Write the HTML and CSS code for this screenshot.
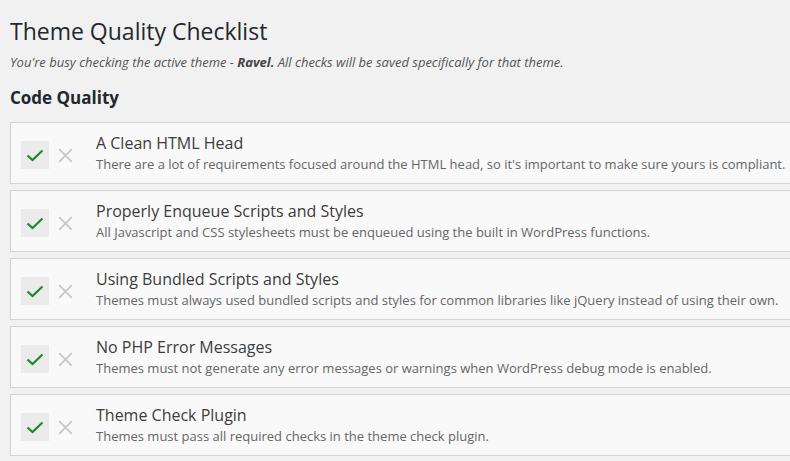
FILE: index.html
```html
<!DOCTYPE html>
<html>
<head>
<meta charset="utf-8">
<link rel="stylesheet" href="styles.css">
</head>
<body>
<div class="wrap">
  <h1 class="title">Theme Quality Checklist</h1>
  <p class="subtitle">You're busy checking the active theme - <b>Ravel.</b> All checks will be saved specifically for that theme.</p>
  <h2 class="section">Code Quality</h2>
  <ul class="list">
    <li class="item">
      <div class="actions">
        <span class="btn check"><svg viewBox="0 0 20 20" width="20" height="20"><path d="M2.5 10.5 L7.5 15 L17.5 5.5" fill="none" stroke="#1e8a2a" stroke-width="2.2"/></svg></span>
        <span class="btn cross"><svg viewBox="0 0 16 16" width="17" height="17"><path d="M2 2 L14 14 M14 2 L2 14" fill="none" stroke="#c8c8c8" stroke-width="1.7"/></svg></span>
      </div>
      <div class="text">
        <div class="name">A Clean HTML Head</div>
        <div class="desc">There are a lot of requirements focused around the HTML head, so it's important to make sure yours is compliant.</div>
      </div>
    </li>
    <li class="item">
      <div class="actions">
        <span class="btn check"><svg viewBox="0 0 20 20" width="20" height="20"><path d="M2.5 10.5 L7.5 15 L17.5 5.5" fill="none" stroke="#1e8a2a" stroke-width="2.2"/></svg></span>
        <span class="btn cross"><svg viewBox="0 0 16 16" width="17" height="17"><path d="M2 2 L14 14 M14 2 L2 14" fill="none" stroke="#c8c8c8" stroke-width="1.7"/></svg></span>
      </div>
      <div class="text">
        <div class="name">Properly Enqueue Scripts and Styles</div>
        <div class="desc">All Javascript and CSS stylesheets must be enqueued using the built in WordPress functions.</div>
      </div>
    </li>
    <li class="item">
      <div class="actions">
        <span class="btn check"><svg viewBox="0 0 20 20" width="20" height="20"><path d="M2.5 10.5 L7.5 15 L17.5 5.5" fill="none" stroke="#1e8a2a" stroke-width="2.2"/></svg></span>
        <span class="btn cross"><svg viewBox="0 0 16 16" width="17" height="17"><path d="M2 2 L14 14 M14 2 L2 14" fill="none" stroke="#c8c8c8" stroke-width="1.7"/></svg></span>
      </div>
      <div class="text">
        <div class="name">Using Bundled Scripts and Styles</div>
        <div class="desc">Themes must always used bundled scripts and styles for common libraries like jQuery instead of using their own.</div>
      </div>
    </li>
    <li class="item">
      <div class="actions">
        <span class="btn check"><svg viewBox="0 0 20 20" width="20" height="20"><path d="M2.5 10.5 L7.5 15 L17.5 5.5" fill="none" stroke="#1e8a2a" stroke-width="2.2"/></svg></span>
        <span class="btn cross"><svg viewBox="0 0 16 16" width="17" height="17"><path d="M2 2 L14 14 M14 2 L2 14" fill="none" stroke="#c8c8c8" stroke-width="1.7"/></svg></span>
      </div>
      <div class="text">
        <div class="name">No PHP Error Messages</div>
        <div class="desc">Themes must not generate any error messages or warnings when WordPress debug mode is enabled.</div>
      </div>
    </li>
    <li class="item">
      <div class="actions">
        <span class="btn check"><svg viewBox="0 0 20 20" width="20" height="20"><path d="M2.5 10.5 L7.5 15 L17.5 5.5" fill="none" stroke="#1e8a2a" stroke-width="2.2"/></svg></span>
        <span class="btn cross"><svg viewBox="0 0 16 16" width="17" height="17"><path d="M2 2 L14 14 M14 2 L2 14" fill="none" stroke="#c8c8c8" stroke-width="1.7"/></svg></span>
      </div>
      <div class="text">
        <div class="name">Theme Check Plugin</div>
        <div class="desc">Themes must pass all required checks in the theme check plugin.</div>
      </div>
    </li>
  </ul>
</div>
</body>
</html>
```
FILE: styles.css
```css
html, body {
  margin: 0;
  padding: 0;
  background: #f1f1f1;
  overflow: hidden;
  font-family: "Open Sans", "Noto Sans", sans-serif;
  color: #23282d;
}
.wrap {
  width: 820px;
  padding: 0 0 0 10px;
}
.title {
  font-size: 23px;
  font-weight: 400;
  line-height: 29px;
  margin: 0;
  padding: 17px 0 0;
  color: #23282d;
}
.subtitle {
  margin: 6px 0 0;
  font-size: 13px;
  line-height: 20px;
  font-style: italic;
  color: #555;
}
.subtitle b {
  font-weight: 700;
  color: #444;
}
.section {
  margin: 15px 0 0;
  font-size: 17px;
  line-height: 22px;
  font-weight: 700;
  color: #23282d;
}
.list {
  list-style: none;
  margin: 13px 0 0;
  padding: 0;
  display: flex;
  flex-direction: column;
  gap: 6px;
}
.item {
  display: flex;
  align-items: center;
  height: 60px;
  background: #f9f9f9;
  border: 1px solid #d4d4d4;
}
.actions {
  display: flex;
  align-items: center;
  gap: 2px;
  padding-left: 10px;
  width: 75px;
  margin-top: 4px;
}
.btn {
  width: 28px;
  height: 28px;
  display: flex;
  align-items: center;
  justify-content: center;
}
.check {
  background: #ebebeb;
}
.text {
  display: flex;
  flex-direction: column;
  margin-top: -1px;
}
.name {
  font-size: 16px;
  line-height: 22px;
  color: #3c3c3c;
}
.desc {
  font-size: 13px;
  line-height: 20px;
  color: #666;
}
```
